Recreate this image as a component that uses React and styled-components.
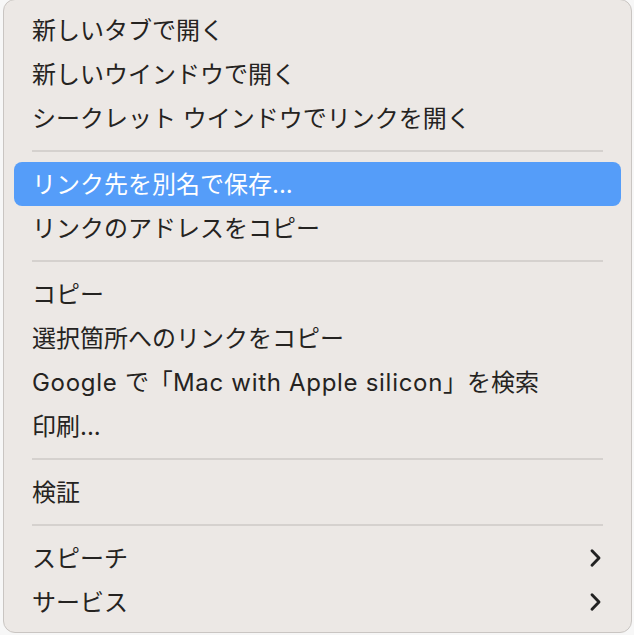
import styled, { createGlobalStyle } from "styled-components"

const GlobalStyle = createGlobalStyle`
    html, body {
        margin: 0;
        padding: 0;
        background: #f7f7f7;
        overflow: hidden;
    }
    body {
        font-family: 'Inter', 'Noto Sans CJK JP', sans-serif;
    }
`

const Latin = styled.span`
    letter-spacing: 0.7px;
`

const sections = [
    [
        { id: "tab", label: "新しいタブで開く" },
        { id: "window", label: "新しいウインドウで開く" },
        { id: "secret", label: "シークレット ウインドウでリンクを開く" },
    ],
    [
        { id: "save", label: "リンク先を別名で保存...", active: true },
        { id: "copylink", label: "リンクのアドレスをコピー" },
    ],
    [
        { id: "copy", label: "コピー" },
        { id: "copysel", label: "選択箇所へのリンクをコピー" },
        { id: "google", label: <><Latin>Google </Latin>で「<Latin>Mac with Apple silicon</Latin>」を検索</> },
        { id: "print", label: "印刷..." },
    ],
    [
        { id: "inspect", label: "検証" },
    ],
    [
        { id: "speech", label: "スピーチ", submenu: true },
        { id: "services", label: "サービス", submenu: true },
    ],
]

function Chevron(){
    return(
        <svg width="13" height="20" viewBox="0 0 13 20" fill="none">
            <path d="M3 2.8 L10 10 L3 17.2" stroke="currentColor" strokeWidth="2.9" strokeLinecap="round" strokeLinejoin="round" />
        </svg>
    )
}

export default function App(){
    return(
        <>
            <GlobalStyle />
            <Menu>
                {sections.map((section, i) =>
                    <Section key={i}>
                        {i > 0 && <Separator />}
                        {section.map(item =>
                            <Item key={item.id} $active={item.active}>
                                <Label>{item.label}</Label>
                                {item.submenu && <Arrow><Chevron /></Arrow>}
                            </Item>
                        )}
                    </Section>
                )}
            </Menu>
        </>
    )
}

const Menu = styled.div`
    box-sizing: border-box;
    margin: -1px 0 0 3px;
    width: 629px;
    height: 634px;
    padding: 8px 10px;
    background: #ece8e5;
    border: 1px solid #c9c5c2;
    border-radius: 12px;
    display: flex;
    flex-direction: column;
`
const Section = styled.div`
    display: flex;
    flex-direction: column;
`
const Separator = styled.div`
    height: 22px;
    margin: 0 18px;
    display: flex;
    align-items: center;
    &::after{
        content: "";
        flex: 1;
        height: 2px;
        background: #d5d1ce;
    }
`
const Item = styled.div`
    height: 44px;
    padding: 0 19px 0 18px;
    display: flex;
    align-items: center;
    justify-content: space-between;
    border-radius: 8px;
    font-size: 24px;
    color: ${props => props.$active ? "#ffffff" : "#252321"};
    background: ${props => props.$active ? "#559df9" : "transparent"};
    white-space: nowrap;
`
const Label = styled.span`
    padding-bottom: 3px;
`
const Arrow = styled.span`
    display: flex;
    color: #222222;
`
